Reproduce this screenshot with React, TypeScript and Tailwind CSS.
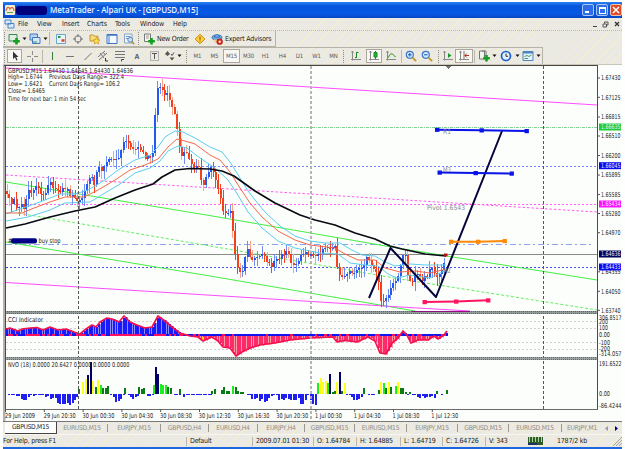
import React from "react";

type Pt = [number, number];

const STEP = 2.43;

function at(points: Pt[], x: number): number {
  for (let i = 1; i < points.length; i++) {
    if (x <= points[i][0]) {
      const [x0, y0] = points[i - 1];
      const [x1, y1] = points[i];
      return y0 + ((y1 - y0) * (x - x0)) / (x1 - x0);
    }
  }
  return points[points.length - 1][1];
}

function noise(i: number): number {
  const v = Math.sin(i * 127.1 + 11.7) * 43758.5453;
  return v - Math.floor(v);
}

const toPoints = (p: Pt[]) => p.map((q) => q.join(",")).join(" ");

const price: Pt[] = [
  [6, 192], [9, 196], [12, 204], [15, 200], [18, 211], [21, 203], [24, 208], [28, 190], [32, 192], [37, 184], [41, 192],
  [46, 194], [50, 180], [54, 190], [60, 191], [66, 187], [70, 195], [76, 197], [81, 203], [86, 187],
  [89, 178], [91, 175], [95, 187], [98, 164], [102, 172], [108, 159], [115, 161], [120, 158], [123, 142], [125, 137],
  [133, 149], [140, 149], [146, 158], [153, 154], [156, 104], [158, 84], [162, 90], [165, 97], [167, 91], [170, 103], [175, 115],
  [178, 135], [181, 158], [186, 150], [190, 162], [195, 168], [199, 165], [203, 190], [208, 172], [212, 165], [216, 180], [221, 198],
  [224, 213], [228, 212], [232, 208], [234, 252], [236, 253], [239, 274], [243, 270], [247, 248], [251, 262], [257, 255],
  [262, 254], [267, 262], [272, 266], [277, 258], [283, 254], [288, 253], [293, 265], [298, 261], [303, 253],
  [310, 255], [315, 257], [322, 251], [326, 247], [336, 248], [338, 274], [343, 279], [350, 273], [358, 271],
  [363, 267], [366, 257], [372, 264], [378, 277], [381, 300], [386, 300], [392, 286], [398, 277], [403, 256],
  [406, 255], [408, 275], [412, 283], [416, 272], [421, 280], [426, 278], [432, 267], [436, 276], [441, 274], [444, 262], [447, 255],
];

const upperBand: Pt[] = [
  [6, 214], [20, 209], [40, 202], [60, 194], [75, 194], [88, 190], [105, 180], [118, 170], [135, 160], [150, 155], [158, 147], [165, 137], [175, 131], [183, 132],
  [195, 138], [210, 147], [222, 152], [230, 162], [240, 178], [248, 191], [255, 200], [265, 212], [280, 226],
  [295, 236], [310, 241], [325, 243], [340, 243], [350, 249], [362, 255], [375, 256], [385, 262], [395, 266],
  [410, 264], [425, 265], [446, 265],
];
const midBand: Pt[] = [
  [6, 213], [22, 213], [34, 208], [50, 202], [65, 197], [84, 197], [98, 190], [115, 180], [130, 170], [145, 165], [158, 159], [168, 147],
  [177, 139], [185, 141], [195, 144], [210, 155], [220, 160], [230, 172], [240, 188], [250, 203], [262, 217],
  [278, 231], [295, 240], [310, 245], [335, 248], [345, 254], [358, 260], [375, 260], [385, 268], [400, 272],
  [415, 271], [430, 273], [446, 269],
];
const lowerBand: Pt[] = [
  [6, 221], [28, 217], [50, 210], [65, 203], [90, 202], [105, 193], [120, 184], [135, 173], [150, 168], [160, 161], [168, 151],
  [178, 146], [187, 148], [200, 158], [215, 168], [228, 180], [236, 192], [248, 212], [262, 228], [278, 241],
  [295, 248], [320, 253], [338, 254], [350, 263], [365, 265], [378, 266], [388, 274], [397, 278], [410, 275],
  [430, 278], [446, 270],
];
const slowMa: Pt[] = [
  [6, 228], [25, 224], [50, 217], [75, 211], [95, 207], [115, 198], [135, 190], [153, 184], [162, 177], [175, 170],
  [190, 168.5], [210, 169], [222, 171], [234, 176], [255, 191], [275, 203], [300, 215], [315, 220], [335, 225], [355, 233],
  [375, 239], [390, 246], [402, 249], [425, 254], [446, 256],
];

const cci: Pt[] = [
  [6, 329], [10, 328], [18, 331], [22, 329], [30, 328], [37, 327.5], [43, 330], [50, 327], [58, 330], [66, 329],
  [74, 332], [80, 334], [86, 329], [92, 325], [96, 327], [100, 322], [107, 318], [112, 319], [119, 322], [124, 316],
  [130, 322], [137, 325], [145, 328], [152, 327], [158, 316], [165, 321], [172, 327], [180, 333], [190, 336],
  [198, 337], [203, 341], [212, 337], [218, 341], [223, 347], [230, 348], [236, 356], [242, 352], [250, 348],
  [260, 345], [275, 343], [290, 340], [310, 338], [333, 337], [337, 342], [345, 340.5], [357, 342], [368, 337],
  [375, 341], [380, 353], [386, 354], [392, 343], [398, 338], [403, 331], [407, 335], [411, 343], [418, 340],
  [428, 340], [434, 336], [438, 339], [444, 335], [447, 331],
];

const G = "#0a7a14", L = "#1cf01c", Y = "#ffff1a", N = "#000066";
const nvoUp: [number, number, string][] = [
  [79, 389, G], [83, 382, Y], [85.5, 379, Y], [88, 375, N], [90.5, 362, N], [93, 381, Y], [95.5, 387, G], [98, 380, Y],
  [100.5, 385, L], [103, 388, G], [105.5, 388, G], [108, 386, G], [124.5, 388, G], [139, 387, G], [141.5, 389, G],
  [144, 388, G], [153.5, 385, L], [156, 367, N], [158.2, 374, N], [160.6, 384, L], [163, 385, L], [165.5, 385, L],
  [168, 387, G], [170.5, 388, G], [180, 389, G], [212, 391, G], [214.5, 389, G], [221.7, 390, G], [224, 387, G], [226.5, 391, G],
  [229, 391, G], [233, 386, L], [235.5, 387, G], [238, 391, G], [240.5, 392, G], [243, 392, G], [318.3, 383, L], [320.7, 378, Y],
  [323, 382, Y], [325.5, 381, Y], [328, 383, L], [330.4, 374, N], [332.8, 392, G], [335, 391, G], [337.4, 382, Y],
  [340, 372, N], [342.4, 391, G], [344.8, 383, Y], [364.4, 388, G], [379, 390, G], [381.2, 382, Y], [383.6, 383, L],
  [386, 388, G], [388.5, 382, Y], [391, 387, G], [396, 386, L], [398.4, 382, Y], [400.8, 388, G], [403.2, 388, G],
  [405.6, 392, G], [410, 392, G], [436.7, 391, G], [446.7, 390, G],
];
const nvoDown: Pt[] = [
  [6, 394], [10, 396], [17, 399], [21, 402], [25, 401], [30, 397], [36, 395], [40, 395], [45, 398], [50, 400], [55, 402], [60, 406],
  [65, 406], [69, 406], [73, 403], [77, 398], [80, 394], [109, 394], [113, 399], [117, 404], [121, 399], [124, 396],
  [128, 398], [134, 400], [138, 397], [146, 396], [151, 396], [173, 395], [182, 398], [190, 396], [200, 397],
  [208, 396], [212, 394], [244, 394], [250, 399], [257, 402], [268, 402], [274, 395], [279, 402], [284, 399],
  [290, 401], [297, 401], [302, 407], [307, 397], [311, 402], [314, 407], [317, 404], [319, 394], [346, 395],
  [352, 400], [357, 402], [362, 399], [367, 396], [372, 396], [375, 394], [412, 395], [418, 399], [424, 400],
  [431, 397], [434, 401], [436, 394], [441, 395], [444, 394],
];

const priceLabels: [string, number][] = [
  ["1.67430", 78], ["1.67125", 97.3], ["1.66815", 117], ["1.66510", 136], ["1.66200", 155.5], ["1.65895", 175],
  ["1.65585", 194.5], ["1.65280", 213.5], ["1.64970", 232.7], ["1.64355", 271.8], ["1.64050", 291.3], ["1.63740", 310.3],
];
const priceTags: [string, number, string][] = [
  ["1.66635", 127, "#1ccc3c"], ["1.66045", 165.7, "#0a0af0"], ["1.65434", 204, "#ff12ff"],
  ["1.64433", 267, "#0a0af0"], ["1.64636", 254, "#00005a"],
];
const times = [
  "29 Jun 2009", "29 Jun 20:30", "30 Jun 00:30", "30 Jun 04:30", "30 Jun 08:30", "30 Jun 12:30", "30 Jun 16:30",
  "30 Jun 20:30", "1 Jul 00:30", "1 Jul 04:30", "1 Jul 08:30", "1 Jul 12:30",
];

function Label({ x, y, w, fill = "#222", children }: { x: number; y: number; w: number; fill?: string; children: string }) {
  return (
    <text x={x} y={y + 2.4} fill={fill} textLength={w} lengthAdjust="spacingAndGlyphs" fontSize="6.6">
      {children}
    </text>
  );
}

function Candles() {
  const out: React.ReactNode[] = [];
  for (let i = 0; i < 181; i++) {
    const x = 7 + i * STEP;
    const open = at(price, x - STEP) + (noise(i - 1) - 0.5) * 4;
    const close = at(price, x) + (noise(i) - 0.5) * 4;
    const top = Math.min(open, close);
    const h = Math.max(1.4, Math.abs(open - close));
    const up = close < open;
    const color = up ? "#2558ee" : "#f4401c";
    const wick = up ? "#6f8df0" : noise(i + 50) > 0.5 ? "#f9a58c" : "#f4401c";
    const hi = Math.max(78, top - 1 - noise(i + 300) * 8);
    const lo = top + h + 1 + noise(i + 600) * 8;
    out.push(
      <g key={i}>
        <rect x={x - 0.5} y={hi} width="1" height={lo - hi} fill={wick} />
        <rect x={x - 1} y={top} width="2" height={h} fill={color} />
      </g>
    );
  }
  return <g shapeRendering="crispEdges">{out}</g>;
}

function Handles({ pts, color }: { pts: Pt[]; color: string }) {
  return (
    <g>
      <polyline points={toPoints(pts)} stroke={color} strokeWidth="2" fill="none" />
      {pts.map(([x, y]) => (
        <rect key={x} x={x - 2} y={y - 2} width="4.4" height="4.2" fill={color} />
      ))}
    </g>
  );
}

function Chart() {
  const bars = Array.from({ length: 182 }, (_, i) => 6 + i * STEP);
  return (
    <svg width="619" height="357" viewBox="3 64 619 357" className="block shrink-0 overflow-visible" fontFamily="'DejaVu Sans Condensed','DejaVu Sans',sans-serif">
      <rect x="3" y="64" width="619" height="357" fill="#fcfefb" />
      <rect x="3" y="64" width="2.5" height="357" fill="#b5b1a9" />
      <rect x="3" y="64" width="619" height="1" fill="#c9c6bb" />
      <rect x="4" y="65" width="594" height="1" fill="#4a4545" />

      {/* reference levels */}
      <g fill="none" strokeWidth="1" shapeRendering="crispEdges">
        <path d="M6 127.5H597" stroke="#7fd38f" strokeDasharray="3 1 1 1" />
        <path d="M6 166.5H597" stroke="#7482f5" strokeDasharray="2 2" />
        <path d="M6 204.5H597" stroke="#ff62f6" strokeDasharray="2 2" />
        <path d="M6 244.5H593" stroke="#8ba6ee" strokeDasharray="6 3 2 3" />
        <path d="M6 254.5H597" stroke="#8a8a8a" />
        <path d="M6 267.5H597" stroke="#4c50e0" strokeDasharray="2 2" />
        <path d="M6 321.5H597M6 328.5H597M6 342.5H597M6 349.5H597" stroke="#cfcfd6" strokeDasharray="2 2" />
      </g>
      <g fill="none" strokeWidth="1">
        <path d="M6 68L597 105" stroke="#ff4cff" />
        <path d="M6 175L597 212" stroke="#ff5cf2" strokeDasharray="2.5 2" />
        <path d="M6 182L210 215.6L400 248.5L597 280" stroke="#45ee45" />
        <path d="M18 213L210 246L400 279L597 310" stroke="#63ee63" strokeDasharray="3 2" />
        <path d="M6 242L210 276L415 311" stroke="#45ee45" />
        <path d="M6 282.5L400 307L470 311" stroke="#ff4cff" />
      </g>

      <Candles />

      <g fill="none" strokeLinejoin="round">
        <polyline points={toPoints(upperBand)} stroke="#5ccdf0" />
        <polyline points={toPoints(lowerBand)} stroke="#5ccdf0" />
        <polyline points={toPoints(midBand)} stroke="#f4674a" />
        <polyline points={toPoints(slowMa)} stroke="#0a0a14" strokeWidth="1.7" />
        <path d="M369 298L390.5 248L436 297L502 131" stroke="#05053c" strokeWidth="2" />
      </g>

      {/* CCI */}
      <g shapeRendering="crispEdges">
        {bars.map((x, i) => {
          const y = at(cci, x);
          return y < 335 ? (
            <rect key={i} x={x} y={y} width="2" height={335 - y} fill="#1a1aff" />
          ) : (
            <rect key={i} x={x} y="335" width="2" height={y - 335} fill="#ff2a6c" />
          );
        })}
        {bars.map((x, i) => {
          const y = at(cci, x);
          const red = x < 180 ? noise(i + 40) > 0.35 : noise(i + 40) > 0.8;
          return (
            <g key={i}>
              <rect x={x + 2} y={Math.min(y, 336)} width="0.6" height={Math.abs(y - 335)} fill={y < 335 ? "#8d8dff" : "#ff9aa0"} />
              <rect x={x} y="334" width="2.5" height="2.4" fill={red ? "#ff1060" : "#1414ee"} />
            </g>
          );
        })}
      </g>
      <rect x="202" y="337" width="2" height="3" fill="#ffd800" />
      <polyline points={toPoints(cci)} fill="none" stroke="#f5104e" strokeWidth="1.7" strokeLinejoin="round" />

      {/* NVO */}
      <g shapeRendering="crispEdges">
        {bars.map((x, i) => {
          if (nvoUp.some((b) => Math.abs(b[0] - x) < 1.3)) return null;
          const d = at(nvoDown, x) - 394;
          if (d < 0.6) return null;
          return <rect key={i} x={x} y="394" width="2" height={Math.max(1, d - noise(i + 9) * 3.5)} fill="#1f1fef" />;
        })}
        {nvoUp.map(([x, y, c]) => (
          <rect key={x} x={x - 1} y={y} width="2" height={394 - y} fill={c} />
        ))}
      </g>

      {/* day separators */}
      <path d="M78.5 66V409M543.5 66V409" stroke="#555" strokeDasharray="3 2" shapeRendering="crispEdges" />
      <path d="M311 66V421" stroke="#b0acb0" strokeWidth="1.8" strokeDasharray="3 2" />

      {/* pane dividers and frame */}
      <g shapeRendering="crispEdges">
        <rect x="5" y="311" width="593" height="3" fill="#929a9a" />
        <path d="M5 311.5H597M5 313.5H597" stroke="#68605c" strokeDasharray="1 1" />
        <rect x="5" y="357" width="593" height="3" fill="#9aa2a2" />
        <path d="M5 357.5H597M5 359.5H597" stroke="#706862" strokeDasharray="1 1" />
        <path d="M412 311.5H470" stroke="#8c1080" />
        <path d="M5.5 66V409M597.5 66V410" stroke="#4b4b4b" />
        <path d="M5 409.5H598" stroke="#6a6a6a" />
        <path d="M445 66H452L448.5 69Z" fill="#777" />
      </g>

      <Handles color="#0a14e8" pts={[[437, 129.7], [481.5, 130.3], [526.5, 131]]} />
      <Handles color="#0a14e8" pts={[[439.5, 172.5], [475.5, 173], [511.5, 173.5]]} />
      <Handles color="#ff8a0a" pts={[[451, 241.7], [478, 241.7], [504.5, 241]]} />
      <Handles color="#ff1464" pts={[[424.5, 302], [456, 301.5], [488, 300.3]]} />
      <rect x="444" y="253.5" width="3.5" height="3" fill="#b01818" />

      <Label x={443} y={131.5} w={8} fill="#8a8a9a">R1</Label>
      <Label x={443} y={170} w={8} fill="#8a8a9a">M3</Label>
      <Label x={427} y={208} w={38} fill="#8a8a8a">Pivot  1.6543</Label>
      <Label x={443} y={271} w={8} fill="#8a8a8a">M2</Label>

      <Label x={8} y={70.7} w={125}>GBPUSD,M15  1.64430 1.64645 1.64430 1.64636</Label>
      <Label x={8} y={77} w={34.5}>High= 1.6744</Label>
      <Label x={49} y={77} w={75}>Previous Days Range= 322.4</Label>
      <Label x={8} y={84} w={34.5}>Low= 1.6421</Label>
      <Label x={49} y={84} w={71}>Current Days Range= 106.2</Label>
      <Label x={8} y={91} w={37}>Close= 1.6465</Label>
      <Label x={8} y={98.3} w={78}>Time for next bar: 1 min 54 sec</Label>
      <Label x={8} y={241} w={4}>#</Label>
      <rect x="11" y="238.2" width="26" height="5.2" rx="2" fill="#000087" />
      <Label x={38.5} y={240.7} w={22}>buy stop</Label>
      <Label x={8} y={319.5} w={35}>CCI Indicator</Label>
      <Label x={8} y={365} w={121.5}>NVO (18) 0.0000 20.6427 0.0000 0.0000 0.0000</Label>

      {priceLabels.map(([t, y]) => (
        <g key={t}>
          <path d={`M597 ${y}h3`} stroke="#555" />
          <Label x={601} y={y} w={19.5}>{t}</Label>
        </g>
      ))}
      {priceTags.map(([t, y, c]) => (
        <g key={t}>
          <rect x="599" y={y - 3.5} width="22" height="7" fill={c} />
          <Label x={601} y={y} w={19.5} fill="#e6eeff">{t}</Label>
        </g>
      ))}
      <Label x={599} y={317.8} w={22.5}>306.8517</Label>
      <Label x={599} y={321.5} w={9}>200</Label>
      <Label x={599} y={328} w={9}>100</Label>
      <Label x={599} y={335} w={11}>0.00</Label>
      <Label x={599} y={342.5} w={11}>-100</Label>
      <Label x={599} y={349} w={11}>-200</Label>
      <Label x={599} y={354} w={22.5}>-314.057</Label>
      <Label x={599} y={363.8} w={22.5}>191.6522</Label>
      <Label x={599} y={394} w={11}>0.00</Label>
      <Label x={599} y={406} w={22.5}>-86.4244</Label>

      {times.map((t, i) => (
        <g key={t}>
          <path d={`M${5.5 + i * 38.8} 409v3`} stroke="#555" />
          <Label x={5 + i * 38.75} y={415.3} w={i === 0 ? 30 : i > 7 ? 27 : 32}>{t}</Label>
        </g>
      ))}
    </svg>
  );
}

function Cell({ w, pressed, children }: { w: string; pressed?: boolean; children?: React.ReactNode }) {
  return (
    <div
      className={`${w} flex h-full shrink-0 items-center justify-center ${
        pressed ? "border border-[#aaa79c] bg-[#f8f7f3]" : ""
      }`}
    >
      {children}
    </div>
  );
}

function Icon({ children }: { children: React.ReactNode }) {
  return (
    <svg width="12" height="12" viewBox="0 0 12 12" fill="none" stroke="#777" strokeWidth="1" className="block shrink-0">
      {children}
    </svg>
  );
}

const Grip = () => <div className="mx-px h-[13px] w-[2px] shrink-0 border-l border-dotted border-[#8d8a80]" />;
const Sep = () => <div className="mx-px h-[13px] w-[2px] shrink-0 border-l border-[#bab7ab]" />;
const Caret = () => (
  <svg width="5" height="4" viewBox="0 0 5 4" className="block shrink-0">
    <path d="M0.5 0.5H4.5L2.5 3Z" fill="#111" />
  </svg>
);

const plus = <path d="M8.5 5V11.5M5.2 8.2H11.8" stroke="#12a022" strokeWidth="2.6" />;

function StandardBar() {
  return (
    <div className="flex h-4 w-[273px] shrink-0 items-center border-b border-r border-[#b5b2a8]">
      <Grip />
      <Cell w="w-[14px]"><Icon><path d="M1 1.5H9V8H1Z" fill="#dff0df" stroke="#3c8a5a" />{plus}</Icon></Cell>
      <Cell w="w-[7px]"><Caret /></Cell>
      <Cell w="w-[14px]"><Icon><path d="M1 1H8.5V7H1Z" fill="#b9d3f5" stroke="#4279bd" /><path d="M3.5 4.5H11V10.5H3.5Z" fill="#d8e8fb" stroke="#4279bd" /><path d="M4 9H8" stroke="#3c8a5a" /></Icon></Cell>
      <Cell w="w-[6px]"><Caret /></Cell>
      <Sep />
      <Cell w="w-[17px]"><Icon><path d="M1.5 1.5H10.5V10.5H1.5Z" fill="#e5f4fb" stroke="#6aa4cf" /><path d="M3 4H5.5" stroke="#1f9a3c" strokeWidth="2" /><path d="M6.5 7.5H9.5" stroke="#e0402c" strokeWidth="2.5" /></Icon></Cell>
      <Cell w="w-[17px]"><Icon><circle cx="6" cy="6" r="3.3" /><path d="M6 1V4M6 8V11M1 6H4M8 6H11" /></Icon></Cell>
      <Cell w="w-[17px]"><Icon><path d="M1 2H4.5L5.5 3.2H9V8H1Z" fill="#f7dc77" stroke="#c2952c" /><path d="M7.5 4.5L8.6 6.7L11 7L9.2 8.6L9.7 11L7.5 9.8L5.3 11L5.8 8.6L4 7L6.4 6.7Z" fill="#ffe14a" stroke="#c78d18" strokeWidth="0.7" /></Icon></Cell>
      <Cell w="w-[17px]"><Icon><path d="M1 1.5H11V10.5H1Z" fill="#f4f9ff" stroke="#3c74bd" /><path d="M1 2H11" stroke="#3c74bd" strokeWidth="1.5" /><path d="M2 3H4V10H2Z" fill="#93b8ea" stroke="none" /></Icon></Cell>
      <Cell w="w-[17px]"><Icon><path d="M1.5 1H9V10H1.5Z" fill="#eef4fb" stroke="#8aa6c4" /><path d="M3 3.5H7.5M3 5.5H5" stroke="#7c9ccb" /><circle cx="7.2" cy="6.8" r="2.4" fill="#cfe3f7" stroke="#5a82b4" /><path d="M9 8.7L11.2 11.2" stroke="#b08a2c" strokeWidth="1.5" /></Icon></Cell>
      <Grip />
      <Cell w="w-[16px]"><Icon><path d="M1.5 1H7.5V8.5H1.5Z" fill="#f6f6ee" stroke="#777" /><path d="M3 3H6M3 5H6" stroke="#999" />{plus}</Icon></Cell>
      <span className="w-[34px] shrink-0 whitespace-nowrap pt-[2px] text-[7px] tracking-[-0.25px]">New Order</span>
      <Cell w="w-[17px]"><Icon><path d="M6 1.2L10.8 6L6 10.8L1.2 6Z" fill="#ffd23c" stroke="#c8860a" /><path d="M6 3.5V6.8M6 7.6V8.6" stroke="#7a4a00" /></Icon></Cell>
      <Cell w="w-[17px]"><Icon><ellipse cx="6" cy="4.5" rx="5" ry="2.5" fill="#6aa8e8" stroke="#356eb5" /><path d="M3.5 4C3.5 1 8.5 1 8.5 4Z" fill="#8fc2f2" stroke="#356eb5" /><path d="M2.5 6.5C3 9 4.5 10.5 6 10.5V6.5Z" fill="#edd08a" stroke="none" /><circle cx="8.7" cy="8.7" r="2.9" fill="#dc2a1e" stroke="#a81510" strokeWidth="0.6" /><path d="M7.7 7.7H9.7V9.7H7.7Z" fill="#fff" stroke="none" /></Icon></Cell>
      <span className="shrink-0 whitespace-nowrap pt-[2px] text-[7px] tracking-[-0.2px]">Expert Advisors</span>
    </div>
  );
}

const periods = ["M1", "M5", "M15", "M30", "H1", "H4", "D1", "W1", "MN"];
const axes = <path d="M2.5 1V10.5M1 9.5H11M1.5 2.5L2.5 1L3.5 2.5" stroke="#8a8a8a" />;

function DrawBar() {
  return (
    <div className="flex h-[17px] w-[540px] shrink-0 items-center border-r border-t border-[#b5b2a8] py-px">
      <Grip />
      <Cell w="w-[15px]" pressed><Icon><path d="M4 1.5V9L6 7.3L7.3 10.5L8.5 10L7.2 7H9.5Z" fill="#333" stroke="none" /></Icon></Cell>
      <Cell w="w-[19px]"><Icon><path d="M6.5 1V5M6.5 8V12M1 6.5H5M8 6.5H12" stroke="#8a8a8a" /></Icon></Cell>
      <Sep />
      <Cell w="w-[14px]"><Icon><path d="M6.5 2V10" stroke="#3a7a3a" /></Icon></Cell>
      <Cell w="w-[22px]"><Icon><path d="M2 6.5H10" /></Icon></Cell>
      <Cell w="w-[13px]"><Icon><path d="M2.5 10L9.5 3" /></Icon></Cell>
      <Cell w="w-[18px]"><Icon><path d="M1 7L8 1M2 10L10 3M3 3L7 8M6 2L8.5 5" /><path d="M8.500 8V11H11" stroke="#333" /></Icon></Cell>
      <Cell w="w-[16px]"><Icon><path d="M1 1.5H11M1 4.5H11M1 7.5H11" /><path d="M7.500 11.500V9.500H10" stroke="#444" /></Icon></Cell>
      <Cell w="w-[18px]"><span className="pt-[2px] text-[7px] font-bold text-[#666]">A</span></Cell>
      <Cell w="w-[16px]"><Icon><path d="M2.5 1.5H10.5V10.5H2.5Z" strokeDasharray="1 1" /><path d="M4 3.5H9M6.500 4V9" stroke="#555" /></Icon></Cell>
      <Cell w="w-[15px]"><Icon><path d="M1 4L3.5 1L6 4L3.5 6Z" fill="#555" stroke="none" /><path d="M7 4L8 5.5L10 2.5" stroke="#555" /><path d="M5.5 7.5H10.5L8 10.5Z" fill="#555" stroke="none" /></Icon></Cell>
      <Cell w="w-[5px]"><Caret /></Cell>
      <Cell w="w-[3px]" />
      <Grip />
      {periods.map((p) => (
        <Cell key={p} w="w-[17px]" pressed={p === "M15"}>
          <span className="text-[6px] tracking-[-0.1px] text-[#5a5a5a]">{p}</span>
        </Cell>
      ))}
      <Grip />
      <Cell w="w-[20px]"><Icon>{axes}<path d="M6.5 2V8M8.5 2.5H6.5M6.5 7.5H5" stroke="#158a20" /></Icon></Cell>
      <Cell w="w-[16px]" pressed><Icon>{axes}<path d="M7.5 1V9" stroke="#158a20" /><path d="M6 2.5H9V7H6Z" fill="#1fb52e" stroke="#158a20" /></Icon></Cell>
      <Cell w="w-[18px]"><Icon>{axes}<path d="M3.5 7.5C5 2.5 7.5 3 10.5 7" stroke="#158a20" /></Icon></Cell>
      <Sep />
      <Cell w="w-[13px]"><Icon><circle cx="4.8" cy="4.8" r="3.5" fill="#d6ebff" stroke="#3c78c4" strokeWidth="1.2" /><path d="M3 4.8H6.6M4.8 3V6.6" stroke="#1558b5" /><path d="M7.6 7.6L11 11" stroke="#c9992a" strokeWidth="2" /></Icon></Cell>
      <Cell w="w-[20px]"><Icon><circle cx="4.8" cy="4.8" r="3.5" fill="#d6ebff" stroke="#3c78c4" strokeWidth="1.2" /><path d="M3 4.8H6.6" stroke="#1558b5" /><path d="M7.6 7.6L11 11" stroke="#c9992a" strokeWidth="2" /></Icon></Cell>
      <Grip />
      <Cell w="w-[14px]"><Icon>{axes}<path d="M6 3L9.5 5.5L6 8Z" fill="#1a9a26" stroke="none" /></Icon></Cell>
      <Cell w="w-[18px]" pressed><Icon>{axes}<path d="M6 1V9" /><path d="M11 5.5H7M8.8 3.5L6.8 5.5L8.8 7.5" stroke="#b8321c" /></Icon></Cell>
      <Sep />
      <Cell w="w-[14px]"><Icon><path d="M1.5 1H6.5V9H1.5ZM4 1H8V6" fill="#f3f3ee" />{plus}</Icon></Cell>
      <Cell w="w-[6px]"><Caret /></Cell>
      <Cell w="w-[18px]"><Icon><circle cx="6" cy="6" r="4.5" fill="#e2f0ff" stroke="#2060c4" strokeWidth="1.7" /><path d="M6 3.5V6.3H8" stroke="#333" /></Icon></Cell>
      <Cell w="w-[5px]"><Caret /></Cell>
      <Cell w="w-[15px]"><Icon><path d="M1 1.5H11V10.5H1Z" fill="#e4f1fc" stroke="#4c86bd" /><path d="M1 2.5H11" stroke="#4c86bd" strokeWidth="2" /><path d="M2.5 6.5L5 5.5L7 6.5L9.5 5M2.5 8.5H6" stroke="#579a68" /></Icon></Cell>
      <Cell w="w-[6px]"><Caret /></Cell>
    </div>
  );
}

const menus: [string, string][] = [
  ["File", "w-[19px]"], ["View", "w-[25px]"], ["Insert", "w-[25px]"], ["Charts", "w-[28px]"],
  ["Tools", "w-[25px]"], ["Window", "w-[33px]"], ["Help", "w-[20px]"],
];

const tabs: [string, string][] = [
  ["EURUSD,M15", "w-[51px]"], ["EURJPY,M15", "w-[53px]"], ["GBPUSD,H4", "w-[48px]"], ["EURUSD,H4", "w-[49px]"],
  ["EURJPY,H4", "w-[47px]"], ["GBPUSD,M15", "w-[50px]"], ["EURUSD,M15", "w-[52px]"], ["EURJPY,M15", "w-[51px]"],
  ["GBPUSD,M15", "w-[51px]"], ["EURUSD,M15", "w-[53px]"], ["EURJPY,M1", "w-[40px]"],
];

const statuses: [string, string][] = [
  ["Default", "w-[66px]"], ["2009.07.01 01:30", "w-[61px]"], ["O: 1.64784", "w-[43px]"], ["H: 1.64885", "w-[44px]"],
  ["L: 1.64719", "w-[42px]"], ["C: 1.64726", "w-[43px]"], ["V: 343", "w-[40px]"],
];

export default function App() {
  return (
    <div className="h-[449px] w-[625px] overflow-hidden bg-[#fdfefd] pl-[3px] pr-[3px] pt-[2px] font-['DejaVu_Sans_Condensed','DejaVu_Sans',sans-serif] leading-none text-[#222]">
      <div className="flex h-[447px] w-[619px] flex-col bg-[#ebe9e5] bg-[repeating-linear-gradient(135deg,transparent_0_5px,#f3efcc_5px_6px)]">
        <div className="flex h-4 shrink-0 items-center bg-[linear-gradient(#2c82f2,#0656dc_25%,#0658e4_75%,#0546c2)]">
          <svg width="12" height="12" viewBox="0 0 12 12" className="ml-px block shrink-0">
            <rect x="1" y="1" width="10" height="10" rx="1" fill="#f5eed6" />
            <path d="M2 7C3 2 5 3 6 5C8 2 10 4 10 7" stroke="#dc6a3c" fill="none" strokeWidth="1.3" />
            <path d="M3 8.5H9" stroke="#5aa04a" />
          </svg>
          <div className="h-[9px] w-[31px] shrink-0 rounded-[3px] bg-[#00007c]" />
          <span className="grow whitespace-pre pl-[3px] font-['Open_Sans',sans-serif] text-[8px] font-semibold tracking-[-0.08px] text-[#eaf1ff]">MetaTrader - Alpari UK - [GBPUSD,M15]</span>
          <div className="flex items-center gap-[2px] text-white">
            <div className="flex h-3 w-3 items-end rounded-[2px] border border-[#a8c4f4] bg-[#2f6de6] pb-[2px] pl-[2px]"><div className="h-[2px] w-[4px] bg-white" /></div>
            <div className="flex h-3 w-3 items-center justify-center rounded-[2px] border border-[#a8c4f4] bg-[#2f6de6]"><div className="h-[7px] w-[7px] border border-t-2 border-white" /></div>
            <div className="flex h-3 w-3 items-center justify-center rounded-[2px] border border-[#f3c0b0] bg-[#e04c26]">
              <svg width="8" height="8" viewBox="0 0 8 8"><path d="M1 1L7 7M7 1L1 7" stroke="#fff" strokeWidth="1.5" /></svg>
            </div>
          </div>
        </div>

        <div className="flex h-[13px] shrink-0 items-center border-b border-dotted border-[#b9b6aa] text-[7px] tracking-[-0.12px]">
          <svg width="11" height="10" viewBox="0 0 11 10" className="ml-px mr-[3px] block shrink-0">
            <path d="M1 1H7V5H1ZM4 4.5H10V9H4Z" fill="#d9e9fb" stroke="#4a86c8" />
          </svg>
          {menus.map(([m, w]) => (
            <span key={m} className={`${w} shrink-0 whitespace-nowrap`}>{m}</span>
          ))}
          <div className="ml-auto flex items-center gap-[5px] pr-[2px]">
            <div className="mt-1 h-px w-[4px] bg-[#444]" />
            <svg width="7" height="7" viewBox="0 0 7 7" fill="none" stroke="#555"><path d="M2.5 2.5V1H6V4H4.5M1 3H4.5V6H1Z" /></svg>
            <svg width="6" height="6" viewBox="0 0 6 6" stroke="#333"><path d="M1 1L5 5M5 1L1 5" strokeWidth="1.3" /></svg>
          </div>
        </div>

        <StandardBar />
        <DrawBar />
        <Chart />

        <div className="flex h-[13px] shrink-0 items-center border-t border-[#777] text-[6.7px] text-[#8e8b86]">
          <div className="ml-[2px] flex h-full w-[52px] shrink-0 items-center justify-center border-b border-r border-[#444] bg-white text-[#222]">
            <span className="whitespace-nowrap tracking-[-0.3px]">GBPUSD,M15</span>
          </div>
          {tabs.map(([t, w], i) => (
            <div key={i} className={`${w} flex h-[8px] shrink-0 items-center justify-center whitespace-nowrap tracking-[-0.25px] ${i < 10 ? "border-r border-[#9b988f]" : ""}`}>
              {t}
            </div>
          ))}
          <svg width="16" height="7" viewBox="0 0 16 7" className="ml-[2px] block shrink-0">
            <path d="M4 1V6L1 3.5Z" fill="#999" />
            <path d="M11 1V6L14 3.5Z" fill="#000078" />
          </svg>
        </div>

        <div className="flex h-[13px] shrink-0 items-center border-t border-[#f7f6f2] text-[7px] tracking-[-0.2px] text-[#222]">
          <span className="w-[183px] shrink-0">For Help, press F1</span>
          {statuses.map(([s, w]) => (
            <div key={s} className={`${w} flex h-[9px] shrink-0 items-center whitespace-nowrap border-l border-[#b9b6ab] pl-[3px]`}>{s}</div>
          ))}
          <svg width="15" height="8" viewBox="0 0 15 8" className="ml-[3px] block shrink-0">
            <rect width="15" height="8" fill="#2f5b2c" />
            <path d="M1.5 0V5M4.5 0V5M7.5 0V5M10.5 0V5M13.5 0V5" stroke="#a8d890" />
            <path d="M0 7H9" stroke="#18286a" strokeWidth="1.5" />
          </svg>
          <span className="ml-[14px] whitespace-nowrap">1787/2 kb</span>
          <svg width="9" height="9" viewBox="0 0 9 9" className="ml-auto block"><path d="M0 9L9 0M3 9L9 3M6 9L9 6" stroke="#a5a297" /></svg>
        </div>
        <div className="grow bg-[#1c66e0]" />
      </div>
    </div>
  );
}
